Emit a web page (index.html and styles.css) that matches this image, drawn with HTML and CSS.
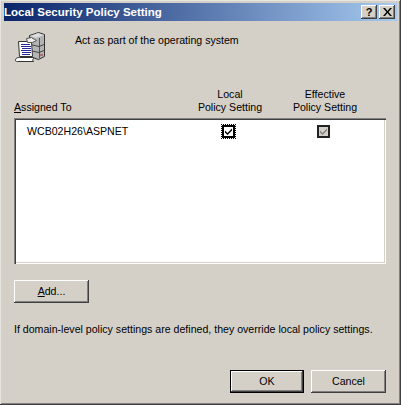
FILE: index.html
```html
<!DOCTYPE html>
<html lang="en">
<head>
<meta charset="utf-8">
<title>Local Security Policy Setting</title>
<link rel="stylesheet" href="styles.css">
</head>
<body>
<div class="window">
  <div class="titlebar">
    <span class="title">Local Security Policy Setting</span>
    <div class="caption-buttons">
      <span class="caption-btn help">?</span>
      <span class="caption-btn close">
        <svg width="9" height="8" viewBox="0 0 9 8"><path d="M0 0h2l2.500 3L7 0h2L5.500 4 9 8H7L4.500 5 2 8H0l3.500-4z" fill="#000"/></svg>
      </span>
    </div>
  </div>
  <div class="content">
    <div class="intro">
      <svg class="policy-icon" width="32" height="32" viewBox="0 0 32 32">
        <path d="M15.500 4.500l9-3 6 2v22l-6 3-9-3z" fill="#b4b4b4" stroke="#333"/>
        <path d="M16 5l8-3 6 2-8 3z" fill="#dcdcdc"/>
        <path d="M25.500 7v20" stroke="#555" fill="none"/>
        <path d="M16 13.500l9 2 5-2M16 19.500l9 2 5-2" stroke="#444" fill="none"/>
        <path d="M26 24h3" stroke="#a03030" fill="none"/>
        <path d="M4.500 10.500h13l1 15h-13z" fill="#fff" stroke="#333"/>
        <path d="M7 13.500h9M7 15.500h10M8 17.500h9M7 19.500h10M8 21.500h9M8 23.500h8" stroke="#2a2a9c" fill="none"/>
        <path d="M1.500 29.500c0-2 1-3 4-3h14v1c-1 1-1 2 0 3h-16c-1 0-2 0-2-1z" fill="#fff" stroke="#333"/>
        <path d="M12.500 7.500l5-1 3 2 2 1-4 2h-5z" fill="#ececec" stroke="#555"/>
      </svg>
      <p class="intro-text">Act as part of the operating system</p>
    </div>
    <div class="headers">
      <span class="head-assigned"><u>A</u>ssigned To</span>
      <span class="head-col">Local<br>Policy Setting</span>
      <span class="head-col">Effective<br>Policy Setting</span>
    </div>
    <div class="listbox">
      <div class="row">
        <span class="row-name">WCB02H26\ASPNET</span>
        <span class="row-cell"><span class="focus"><span class="check">
          <svg width="9" height="9" viewBox="0 0 9 9"><path d="M1 3.500l2.500 2.500L8 1.500V3.500L3.500 8 1 5.500z" fill="#000"/></svg>
        </span></span></span>
        <span class="row-cell"><span class="check disabled">
          <svg width="9" height="9" viewBox="0 0 9 9"><path d="M1 3.500l2.500 2.500L8 1.500V3.500L3.500 8 1 5.500z" fill="#808080"/></svg>
        </span></span>
      </div>
    </div>
    <button class="btn add-btn" type="button"><u>A</u>dd...</button>
    <p class="note">If domain-level policy settings are defined, they override local policy settings.</p>
    <div class="actions">
      <button class="btn default-btn" type="button">OK</button>
      <button class="btn cancel-btn" type="button">Cancel</button>
    </div>
  </div>
</div>
</body>
</html>
```
FILE: styles.css
```css
* { box-sizing: border-box; }
html, body { margin: 0; padding: 0; }
body { width: 401px; height: 405px; overflow: hidden; background: #d4d0c8; }
.window {
  width: 401px;
  height: 405px;
  padding: 3px 4px 4px 4px;
  background: #d4d0c8;
  box-shadow: inset -1px -1px 0 #404040, inset 1px 1px 0 #e8e6e1, inset -2px -2px 0 #808080;
  font: 10.600px/13px "Liberation Sans", Arial, sans-serif;
  color: #000;
  display: flex;
  flex-direction: column;
}
.titlebar {
  height: 18px;
  padding: 0 2px 0 0;
  display: flex;
  align-items: center;
  justify-content: space-between;
  background: linear-gradient(90deg, #0a246a 0%, #a6caf0 100%);
}
.title { color: #fff; font: 700 11.500px/13px "Liberation Sans", Arial, sans-serif; }
.caption-buttons { display: flex; }
.caption-btn {
  width: 16px;
  height: 14px;
  display: flex;
  align-items: center;
  justify-content: center;
  background: #d4d0c8;
  box-shadow: inset -1px -1px 0 #404040, inset 1px 1px 0 #fff, inset -2px -2px 0 #808080;
}
.help { font-weight: 700; font-size: 11px; margin-right: 2px; }
.content {
  flex: 1;
  padding: 7px 11px 8px 10px;
  display: flex;
  flex-direction: column;
}
.intro { display: flex; align-items: flex-start; height: 58px; }
.policy-icon { flex: none; margin-top: 3px; }
.intro-text { margin: 6px 0 0 29px; }
.headers {
  display: grid;
  grid-template-columns: 170px 92px 98px;
  align-items: end;
  height: 32px;
  padding-bottom: 4px;
}
.head-col { text-align: center; }
.listbox {
  width: 372px;
  height: 146px;
  background: #fff;
  padding: 6px 2px 2px;
  box-shadow: inset 1px 1px 0 #808080, inset 2px 2px 0 #404040, inset -1px -1px 0 #fff, inset -2px -2px 0 #d4d0c8;
}
.row {
  display: grid;
  grid-template-columns: 166px 92px 99px;
  align-items: center;
  height: 15px;
}
.row-name { padding-left: 11px; }
.row-cell { display: flex; justify-content: center; }
.focus { padding: 1px; outline: 1px dotted #000; outline-offset: -1px; display: flex; }
.check {
  width: 13px;
  height: 13px;
  display: flex;
  align-items: center;
  justify-content: center;
  background: #fff;
  border: 2px solid #000;
}
.check.disabled { background: #d4d0c8; border-color: #222; }
.btn {
  height: 23px;
  padding: 0;
  border: 0;
  background: #d4d0c8;
  font: inherit;
  color: #000;
  box-shadow: inset -1px -1px 0 #404040, inset 1px 1px 0 #fff, inset -2px -2px 0 #808080;
}
.add-btn { width: 75px; margin-top: 16px; }
.note { margin: 20px 0 0; }
.actions { margin-top: auto; display: flex; justify-content: flex-end; gap: 7px; }
.default-btn {
  width: 74px;
  box-shadow: inset 0 0 0 1px #000, inset -2px -2px 0 #404040, inset 2px 2px 0 #fff, inset -3px -3px 0 #808080;
}
.cancel-btn { width: 75px; }
```
